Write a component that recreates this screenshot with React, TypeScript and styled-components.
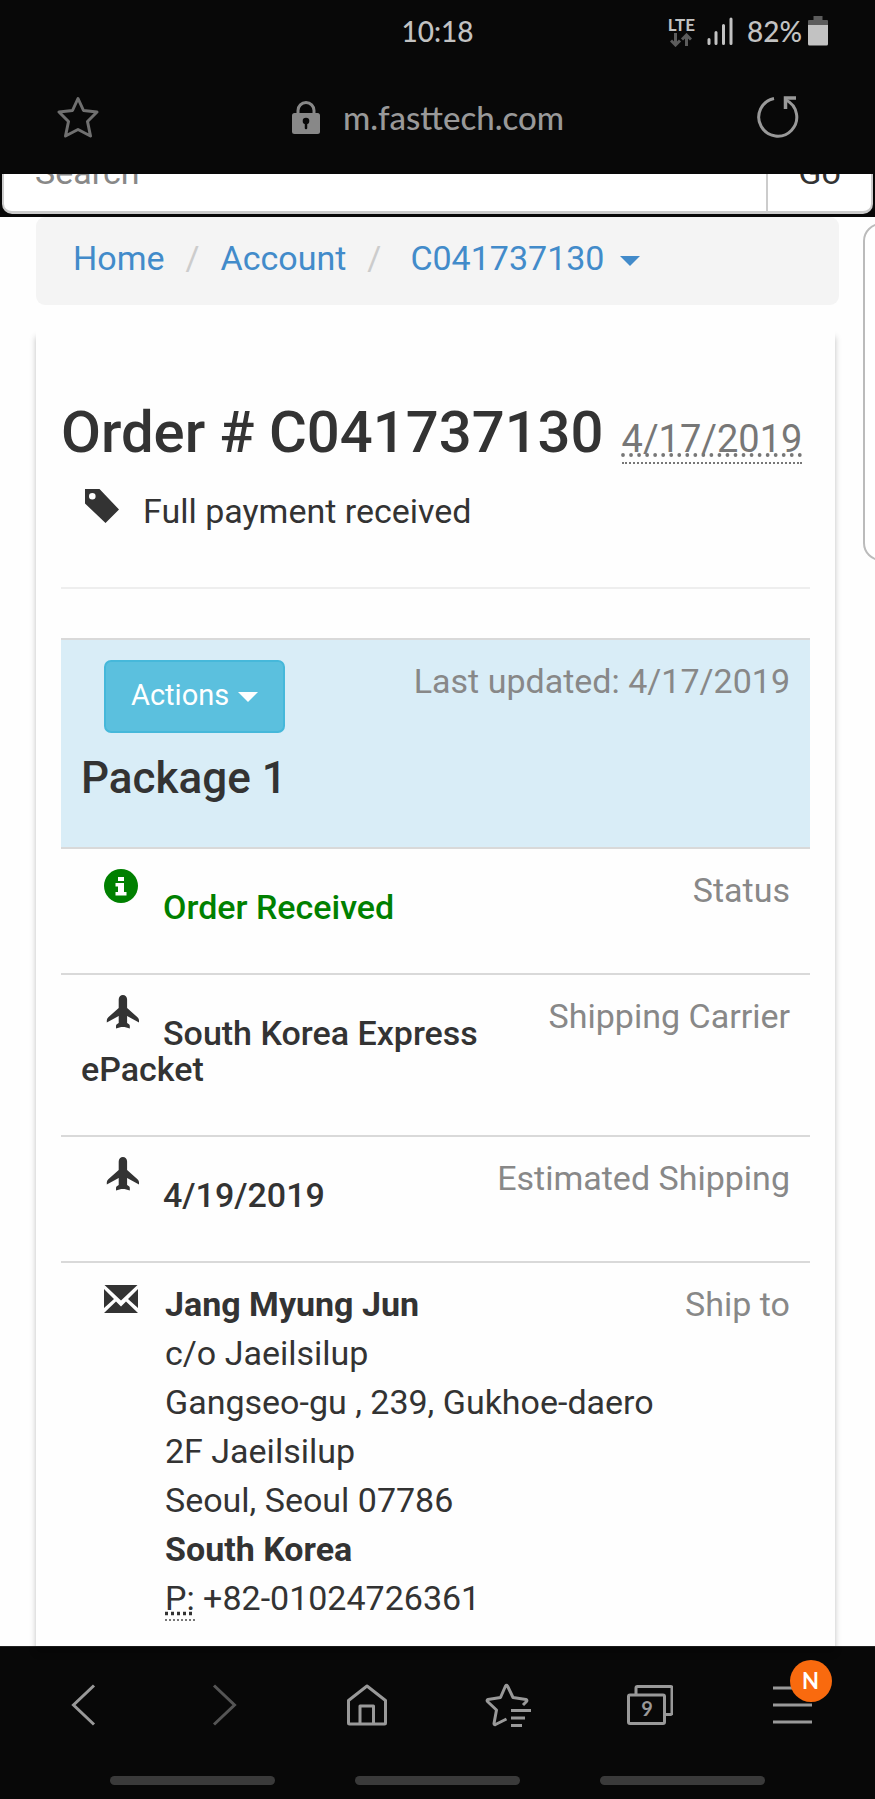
import React from "react";
import styled, { createGlobalStyle } from "styled-components";

const GlobalStyle = createGlobalStyle`
  *, *::before, *::after { box-sizing: border-box; }
  body { margin: 0; background: #fefefe; color: #333; font-family: Roboto, "Liberation Sans", sans-serif; font-size: 34px; line-height: 49px; }
  svg { display: block; }
  h1, h2, p, dl, dd, ol { margin: 0; padding: 0; }
  a { text-decoration: none; }
`;

const Page = styled.div`
  display: flex;
  flex-direction: column;
  min-height: 100vh;
  overflow-x: hidden;
`;

const TopChrome = styled.header`
  background: #080808;
  font-family: Lato, sans-serif;
  height: 174px;
`;

const StatusBar = styled.div`
  display: grid;
  grid-template-columns: 1fr auto 1fr;
  align-items: center;
  height: 62px;
  padding: 0 47px;
  color: #c2c2c2;
  font-size: 28px;
  line-height: 34px;
  font-weight: 500;
`;

const StatusIcons = styled.div`
  grid-column: 3;
  display: flex;
  align-items: center;
  justify-content: flex-end;
  gap: 6px;
`;

const Clock = styled.span`
  grid-column: 2;
`;

const Network = styled.span`
  display: flex;
  flex-direction: column;
  align-items: center;
  margin-right: 6px;
  font-size: 17px;
  line-height: 17px;
  font-weight: 700;
`;

const Signal = styled.span`
  margin-right: 8px;
`;

const AddressBar = styled.div`
  display: grid;
  grid-template-columns: 1fr auto 1fr;
  align-items: center;
  height: 110px;
  padding: 0 76px 0 57px;
`;

const SiteName = styled.div`
  display: flex;
  align-items: center;
  gap: 23px;
  color: #999;
  font-size: 33px;
  line-height: 36px;
  font-weight: 500;
`;

const IconButton = styled.button<{ $end?: boolean }>`
  display: flex;
  align-items: center;
  justify-content: center;
  justify-self: ${(p) => (p.$end ? "end" : "start")};
  padding: 0;
  border: 0;
  background: none;
  color: #999;
`;

const SearchStrip = styled.form`
  display: flex;
  align-items: flex-end;
  height: 43px;
  padding: 0 2px 3px;
  overflow: hidden;
  background: #080808;
`;

const SearchInput = styled.input`
  flex: 1;
  min-width: 0;
  height: 84px;
  padding: 0 31px;
  border: 2px solid #ccc;
  border-bottom-width: 3px;
  border-radius: 10px 0 0 10px;
  background: #fff;
  color: #333;
  font: 34px Roboto, sans-serif;
  &::placeholder { color: #888; opacity: 1; }
`;

const SearchButton = styled.button`
  height: 84px;
  width: 105px;
  padding: 0;
  border: 2px solid #ccc;
  border-left: 0;
  border-bottom-width: 3px;
  border-radius: 0 10px 10px 0;
  background: #fff;
  color: #333;
  font: 34px Roboto, sans-serif;
`;

const Content = styled.main`
  position: relative;
  display: flex;
  flex-direction: column;
  flex: 1;
  padding: 0 36px;
`;

const SidePanel = styled.aside`
  position: absolute;
  top: 6px;
  right: -40px;
  width: 52px;
  height: 338px;
  border: 2px solid #bbb;
  border-radius: 18px;
  background: #fff;
`;

const Breadcrumb = styled.ol`
  display: flex;
  padding: 17px 37px 22px;
  border-radius: 9px;
  background: #f4f4f4;
  list-style: none;
`;

const Crumb = styled.li<{ $wide?: boolean }>`
  &:not(:first-child)::before {
    content: "/";
    padding: 0 ${(p) => (p.$wide ? 29 : 21)}px 0 21px;
    color: #ccc;
  }
`;

const CrumbLink = styled.a`
  color: #428bca;
`;

const Caret = styled.span<{ $gap: number }>`
  display: inline-block;
  margin-left: ${(p) => p.$gap}px;
  border: 10px solid transparent;
  border-top-color: currentColor;
  border-bottom: 0;
  vertical-align: middle;
`;

const Card = styled.section`
  flex: 1;
  margin: 25px 4px 0 0;
  padding: 70px 25px 16px;
  background: #fefefe;
  box-shadow: 0 7px 6px rgba(0, 0, 0, 0.25);
`;

const OrderTitle = styled.h1`
  display: flex;
  align-items: baseline;
  gap: 18px;
  font-size: 58px;
  line-height: 65px;
  font-weight: 500;
  white-space: nowrap;
`;

const OrderDate = styled.abbr`
  border-bottom: 2px dotted #777;
  color: #777;
  font-size: 38px;
  line-height: 46px;
  font-weight: 400;
  text-decoration: underline dotted #777;
`;

const Payment = styled.p`
  display: flex;
  gap: 24px;
  padding: 22px 0 0 24px;
`;

const TagIcon = styled.span`
  padding-top: 2px;
`;

const Divider = styled.hr`
  margin: 51px 0 49px;
  border: 0;
  border-top: 2px solid #eee;
`;

const Row = styled.div<{ $tint?: boolean }>`
  display: flex;
  flex-direction: row-reverse;
  justify-content: space-between;
  padding: 17px 20px 0;
  border-top: 2px solid #d9d9d9;
  background: ${(p) => (p.$tint ? "#d9edf7" : "transparent")};
`;

const Label = styled.dt`
  color: #888;
  white-space: nowrap;
`;

const Value = styled.dd<{ $color?: string }>`
  padding: 3px 0 48px;
  color: ${(p) => p.$color || "#333"};
  font-weight: 500;
  line-height: 36px;
`;

const RowIcon = styled.span`
  display: inline-block;
  width: 34px;
  margin: 0 25px 0 23px;
  vertical-align: 16px;
`;

const PackageHead = styled.dd`
  padding: 3px 0 42px;
`;

const ActionsButton = styled.button`
  display: block;
  height: 73px;
  margin-left: 23px;
  padding: 0 25px 3px;
  border: 2px solid #46b8da;
  border-radius: 7px;
  background: #5bc0de;
  color: #fff;
  font: 29px Roboto, sans-serif;
`;

const PackageTitle = styled.h2`
  margin-top: 18px;
  font-size: 44px;
  line-height: 54px;
  font-weight: 500;
`;

const ShipTo = styled.dd`
  display: flex;
  gap: 27px;
  padding-left: 23px;
`;

const MailIcon = styled.span`
  padding-top: 2px;
`;

const Address = styled.address`
  font-style: normal;
`;

const Phone = styled.abbr`
  padding-bottom: 1px;
  border-bottom: 2px dotted #777;
  text-decoration: underline dotted #333;
`;

const BottomChrome = styled.nav`
  height: 153px;
  padding: 0 12px;
  border-top: 1px solid #222;
  background: #080808;
`;

const Tools = styled.div`
  display: grid;
  grid-template-columns: repeat(6, 1fr);
  height: 115px;
`;

const ToolButton = styled.button<{ $dim?: boolean }>`
  display: flex;
  align-items: center;
  justify-content: center;
  padding: 0;
  border: 0;
  background: none;
  color: ${(p) => (p.$dim ? "#555" : "#999")};
`;

const BadgeAnchor = styled.span`
  position: relative;
`;

const Badge = styled.span`
  position: absolute;
  top: -24px;
  right: -20px;
  width: 42px;
  height: 42px;
  border-radius: 50%;
  background: #f96a0e;
  color: #fff;
  font: 700 22px/42px Lato, sans-serif;
  text-align: center;
`;

const Handles = styled.div`
  display: flex;
  justify-content: center;
  gap: 80px;
  padding-top: 14px;
`;

const Handle = styled.span`
  width: 165px;
  height: 9px;
  border-radius: 5px;
  background: #3a3a3a;
`;

const line = { fill: "none", stroke: "currentColor", strokeWidth: 3 };

const PlaneIcon = () => (
  <svg width="36" height="34" viewBox="0 0 36 34" fill="currentColor">
    <path d="M14.700 4.500a4.200 4.500 0 0 1 8.400 0V13L33.500 22.300q1.500 1.300 1.500 3V27.500L23.100 21V28l1.900 1.300q.8.700.8 1.700v2.500l-5.200-1.500h-3.400L12 33.500V31q0-1 .8-1.700L14.700 28V21L2.800 27.500V25.300q0-1.700 1.500-3L14.700 13Z" />
  </svg>
);

const details = [
  { label: "Shipping Carrier", value: "South Korea Express ePacket" },
  { label: "Estimated Shipping", value: "4/19/2019" },
];

export default function App() {
  return (
    <Page>
      <GlobalStyle />
      <TopChrome>
        <StatusBar>
          <Clock>10:18</Clock>
          <StatusIcons>
            <Network>
              LTE
              <svg width="22" height="14" viewBox="0 0 22 14" fill="none" stroke="#5c5c5c" strokeWidth="3">
                <path d="M5.500 0v12M1 7.500l4.500 4.500L10 7.500M16.500 13V2M12 6.500l4.500-4.500L21 6.500" />
              </svg>
            </Network>
            <Signal>
              <svg width="26" height="28" viewBox="0 0 26 28" fill="none" stroke="currentColor" strokeWidth="3" strokeLinecap="round">
                <path d="M2 22.500v4M9 15.500v11M16.500 8.500v18M24 2v24.500" />
              </svg>
            </Signal>
            <span>82%</span>
            <svg width="20" height="30" viewBox="0 0 20 30">
              <path d="M5.500 0h9v4H19a1 1 0 0 1 1 1v4H0V5a1 1 0 0 1 1-1h4.500Z" fill="#5c5c5c" />
              <path d="M0 9h20v19a1.500 1.500 0 0 1-1.500 1.500h-17A1.500 1.500 0 0 1 0 28Z" fill="currentColor" />
            </svg>
          </StatusIcons>
        </StatusBar>
        <AddressBar>
          <IconButton aria-label="Bookmark">
            <svg width="42" height="42" viewBox="0 0 42 42" {...line} stroke="#707070" strokeLinejoin="round">
              <path d="M21 2.500 26.500 14.500 40 16 30.500 25.500 33.500 40 21 33.500 8.500 40 11.500 25.500 2 16 15.500 14.500Z" />
            </svg>
          </IconButton>
          <SiteName>
            <svg width="28" height="33" viewBox="0 0 28 33">
              <path d="M6 14V9.500a8 8 0 0 1 16 0V14" fill="none" stroke="#888" strokeWidth="3" />
              <rect y="12" width="28" height="21" rx="2.500" fill="#888" />
              <circle cx="14" cy="20" r="3.300" fill="#080808" />
              <path d="M14 20v7" stroke="#080808" strokeWidth="2.500" strokeLinecap="round" />
            </svg>
            m.fasttech.com
          </SiteName>
          <IconButton aria-label="Reload" $end>
            <svg width="42" height="42" viewBox="0 0 42 42" {...line}>
              <path d="M17 2.500A19 19 0 1 0 29 4" />
              <path d="M28.500 13V2H39" strokeWidth="3.500" />
            </svg>
          </IconButton>
        </AddressBar>
      </TopChrome>
      <SearchStrip>
        <SearchInput aria-label="Search" placeholder="Search" />
        <SearchButton type="button">Go</SearchButton>
      </SearchStrip>
      <Content>
        <SidePanel />
        <Breadcrumb>
          <Crumb><CrumbLink href="#home">Home</CrumbLink></Crumb>
          <Crumb><CrumbLink href="#account">Account</CrumbLink></Crumb>
          <Crumb $wide>
            <CrumbLink href="#order">C041737130<Caret $gap={16} /></CrumbLink>
          </Crumb>
        </Breadcrumb>
        <Card>
          <OrderTitle>
            Order # C041737130 <OrderDate>4/17/2019</OrderDate>
          </OrderTitle>
          <Payment>
            <TagIcon>
              <svg width="34" height="34" viewBox="0 0 34 34" fill="currentColor">
                <path fillRule="evenodd" d="M0 0h14.500L34 20.500 20.500 34 0 14.500ZM7.300 4a3.300 3.300 0 1 0 0 6.600 3.300 3.300 0 0 0 0-6.600Z" />
              </svg>
            </TagIcon>
            Full payment received
          </Payment>
          <Divider />
          <dl>
            <Row $tint>
              <Label>Last updated: 4/17/2019</Label>
              <PackageHead>
                <ActionsButton>Actions<Caret $gap={9} /></ActionsButton>
                <PackageTitle>Package 1</PackageTitle>
              </PackageHead>
            </Row>
            <Row>
              <Label>Status</Label>
              <Value $color="green">
                <RowIcon>
                  <svg width="34" height="34" viewBox="0 0 34 34">
                    <circle cx="17" cy="17" r="17" fill="green" />
                    <path d="M14 8h6v4h-6ZM11.500 14H20v9h2.500v3.500h-11V23H14v-5.500h-2.500Z" fill="#fff" />
                  </svg>
                </RowIcon>
                Order Received
              </Value>
            </Row>
            {details.map((d) => (
              <Row key={d.label}>
                <Label>{d.label}</Label>
                <Value><RowIcon><PlaneIcon /></RowIcon>{d.value}</Value>
              </Row>
            ))}
            <Row>
              <Label>Ship to</Label>
              <ShipTo>
                <MailIcon>
                  <svg width="34" height="34" viewBox="0 0 34 34" fill="currentColor">
                    <path d="M.5 3h33L17 18.500ZM0 7 10 17 0 26ZM34 7V26L24 17ZM12 19.500l5 5 5-5L34 31H0Z" />
                  </svg>
                </MailIcon>
                <Address>
                  <strong>Jang Myung Jun</strong><br />
                  c/o Jaeilsilup<br />
                  Gangseo-gu , 239, Gukhoe-daero<br />
                  2F Jaeilsilup<br />
                  Seoul, Seoul 07786<br />
                  <strong>South Korea</strong><br />
                  <Phone title="Phone">P:</Phone> +82-01024726361
                </Address>
              </ShipTo>
            </Row>
          </dl>
        </Card>
      </Content>
      <BottomChrome>
        <Tools>
          <ToolButton aria-label="Back">
            <svg width="26" height="42" viewBox="0 0 26 42" {...line}><path d="M24 1.500 3.500 21 24 40.500" /></svg>
          </ToolButton>
          <ToolButton aria-label="Forward" $dim>
            <svg width="26" height="42" viewBox="0 0 26 42" {...line}><path d="M2 1.500 22.500 21 2 40.500" /></svg>
          </ToolButton>
          <ToolButton aria-label="Home">
            <svg width="42" height="42" viewBox="0 0 42 42" {...line} strokeLinejoin="round">
              <path d="M21 2 39.500 16.500V39a1 1 0 0 1-1 1h-35a1 1 0 0 1-1-1V16.500ZM14 40V22h13.500v18" />
            </svg>
          </ToolButton>
          <ToolButton aria-label="Bookmarks">
            <svg width="46" height="44" viewBox="0 0 46 44" {...line} strokeLinejoin="round">
              <path d="M21.500 36 10.500 41.500Q9 42 9 40.500L11.500 27 2.500 18.500Q1.500 17 3 16.500L15.500 14.500 20.500 3Q21.500 1.500 22.500 3L28 14.500 41 16.500Q42.500 17 41.500 18.500L38 22M26 27.500h20M26 35h14M26 42.500h11" />
            </svg>
          </ToolButton>
          <ToolButton aria-label="Tabs">
            <svg width="46" height="40" viewBox="0 0 46 40" {...line} strokeLinejoin="round">
              <rect x="1.500" y="10" width="36" height="28.500" rx="1.500" />
              <path d="M9 10V3a1.500 1.500 0 0 1 1.500-1.500h33A1.500 1.500 0 0 1 45 3v25a1.500 1.500 0 0 1-1.500 1.500h-6" />
              <text x="20" y="31" textAnchor="middle" fill="currentColor" stroke="none" fontFamily="Lato" fontWeight="700" fontSize="20">9</text>
            </svg>
          </ToolButton>
          <ToolButton aria-label="Menu">
            <BadgeAnchor>
              <svg width="39" height="42" viewBox="0 0 39 42" {...line}><path d="M0 4h39M0 21h39M0 38h39" /></svg>
              <Badge>N</Badge>
            </BadgeAnchor>
          </ToolButton>
        </Tools>
        <Handles><Handle /><Handle /><Handle /></Handles>
      </BottomChrome>
    </Page>
  );
}
